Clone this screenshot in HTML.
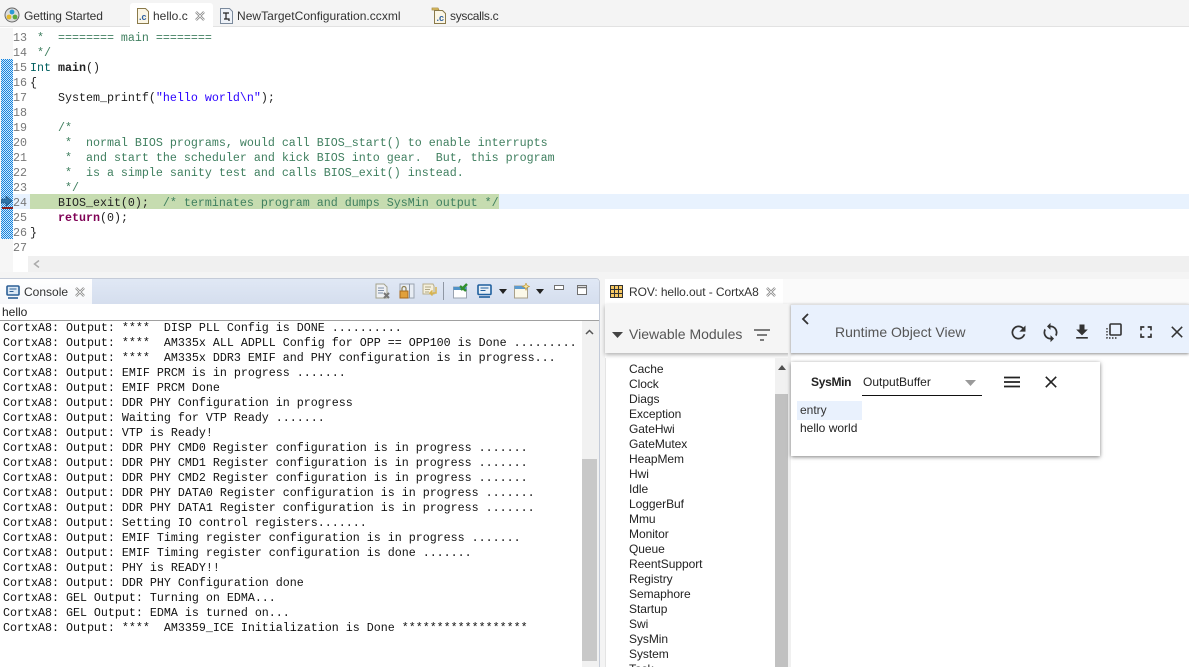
<!DOCTYPE html>
<html><head><meta charset="utf-8"><style>
html,body{margin:0;padding:0;background:#fff}
#p{position:relative;width:1189px;height:667px;overflow:hidden;background:#fff;font-family:"Liberation Sans",sans-serif}
#p div,#p svg,#p span.a{position:absolute}
.m{font-family:"Liberation Mono",monospace;font-size:11.67px;line-height:15px;white-space:pre;color:#222}
.l{left:13px;color:#787878;font-size:11.67px}
.c{color:#3f7f5f}.k{color:#7f0055;font-weight:bold}.s{color:#2a00ff}.t{color:#005f5f}
.tab{font-size:12px;color:#333;white-space:nowrap;line-height:16px}
.r{left:629px;font-size:12px;line-height:15px;color:#222;white-space:nowrap;letter-spacing:-.05px}
</style></head><body><div id="p">

<!-- top tab bar -->
<div style="left:0;top:0;width:1189px;height:27px;background:#f4f4f4;border-bottom:1px solid #e2e2e2;box-sizing:border-box"></div>
<div style="left:130px;top:3px;width:83px;height:25px;background:#fff;border-radius:3px 3px 0 0"></div>
<svg style="left:4px;top:7px" width="16" height="16" viewBox="0 0 16 16"><circle cx="8" cy="8" r="7" fill="#ddd" stroke="#666"/><circle cx="8" cy="5" r="2.400" fill="#2a9ad6"/><circle cx="5" cy="10" r="2.400" fill="#e2b82c"/><circle cx="11" cy="10" r="2.400" fill="#5ca83c"/></svg>
<div class="tab" style="left:24px;top:8px;letter-spacing:-.13px">Getting Started</div>
<svg style="left:136px;top:8px" width="14" height="16" viewBox="0 0 14 16"><path d="M1.500.5h8l3 3v12h-11z" fill="#fbf6e6" stroke="#8a7a4a"/><text x="3" y="12" font-family="Liberation Sans" font-size="9" font-weight="bold" fill="#2d5f9e">.c</text></svg>
<div class="tab" style="left:153px;top:8px">hello.c</div>
<svg style="left:195px;top:11px" width="10" height="10" viewBox="0 0 10 10"><path d="M1 1l8 8M9 1l-8 8" stroke="#888" stroke-width="2.400" fill="none"/><path d="M1 1l8 8M9 1l-8 8" stroke="#fff" stroke-width=".8" fill="none"/></svg>
<svg style="left:220px;top:8px" width="13" height="16" viewBox="0 0 13 16"><path d="M.5.5h9l3 3v12h-12z" fill="#eef2f8" stroke="#7b8a9c"/><path d="M3 5h6M6 5v6M4 11h5v2" stroke="#222" stroke-width="1.200" fill="none"/></svg>
<div class="tab" style="left:237px;top:8px;letter-spacing:.03px">NewTargetConfiguration.ccxml</div>
<svg style="left:431px;top:7px" width="16" height="17" viewBox="0 0 16 17"><path d="M1 1h6l1 2h-7z" fill="#e3c46a" stroke="#a58a3c" stroke-width=".7"/><path d="M3.500 3.500h8l3 3v10h-11z" fill="#fbf6e6" stroke="#8a7a4a"/><text x="5.500" y="14" font-family="Liberation Sans" font-size="9" font-weight="bold" fill="#2d5f9e">.c</text></svg>
<div class="tab" style="left:450px;top:8px;letter-spacing:-.3px">syscalls.c</div>

<!-- editor -->
<div style="left:0;top:28px;width:13px;height:244px;background:#f6f6f6"></div>
<svg style="left:1px;top:59px" width="12" height="180" shape-rendering="crispEdges"><defs><pattern id="h" width="2" height="2" patternUnits="userSpaceOnUse"><rect width="2" height="2" fill="#cfe8fb"/><rect width="1" height="1" fill="#1683dd"/><rect x="1" y="1" width="1" height="1" fill="#1683dd"/></pattern></defs><rect width="12" height="180" fill="url(#h)"/></svg>
<div style="left:13px;top:194px;width:1176px;height:15px;background:#e8f2fe"></div>
<div style="left:30px;top:194px;width:469px;height:15px;background:#c6dcb0"></div>
<svg style="left:1px;top:196px" width="12" height="13" viewBox="0 0 12 13"><path d="M0 3h5V0l6 5-6 5V7H0z" fill="#2f73a8" stroke="#1d4d77" stroke-width=".6"/><path d="M1 11h11v2H1z" fill="#8a2020"/></svg>

<div class="m l" style="top:31px">13</div><div class="m" style="left:30px;top:31px"><span class="c"> *  ======== main ========</span></div>
<div class="m l" style="top:46px">14</div><div class="m" style="left:30px;top:46px"><span class="c"> */</span></div>
<div class="m l" style="top:61px">15</div><div class="m" style="left:30px;top:61px"><span class="t">Int</span> <b>main</b>()</div>
<div class="m l" style="top:76px">16</div><div class="m" style="left:30px;top:76px">{</div>
<div class="m l" style="top:91px">17</div><div class="m" style="left:30px;top:91px">    System_printf(<span class="s">"hello world\n"</span>);</div>
<div class="m l" style="top:106px">18</div>
<div class="m l" style="top:121px">19</div><div class="m" style="left:30px;top:121px"><span class="c">    /*</span></div>
<div class="m l" style="top:136px">20</div><div class="m" style="left:30px;top:136px"><span class="c">     *  normal BIOS programs, would call BIOS_start() to enable interrupts</span></div>
<div class="m l" style="top:151px">21</div><div class="m" style="left:30px;top:151px"><span class="c">     *  and start the scheduler and kick BIOS into gear.  But, this program</span></div>
<div class="m l" style="top:166px">22</div><div class="m" style="left:30px;top:166px"><span class="c">     *  is a simple sanity test and calls BIOS_exit() instead.</span></div>
<div class="m l" style="top:181px">23</div><div class="m" style="left:30px;top:181px"><span class="c">     */</span></div>
<div class="m l" style="top:196px">24</div><div class="m" style="left:30px;top:196px">    BIOS_exit(0);  <span class="c">/* terminates program and dumps SysMin output */</span></div>
<div class="m l" style="top:211px">25</div><div class="m" style="left:30px;top:211px">    <span class="k">return</span>(0);</div>
<div class="m l" style="top:226px">26</div><div class="m" style="left:30px;top:226px">}</div>
<div class="m l" style="top:241px">27</div>

<div style="left:28px;top:256px;width:1161px;height:16px;background:#f0f0f0"></div>
<svg style="left:33px;top:260px" width="7" height="8" viewBox="0 0 7 8"><path d="M6 .5L1.500 4 6 7.500" stroke="#aaa" stroke-width="1.500" fill="none"/></svg>
<div style="left:0;top:272px;width:1189px;height:7px;background:#f4f4f4"></div>

<!-- console panel -->
<div style="left:0;top:278px;width:600px;height:389px;background:#fff;border-top:1px solid #c4cbd8;border-right:1px solid #c4cbd8;box-sizing:border-box;border-radius:0 4px 0 0"></div>
<div style="left:0;top:279px;width:599px;height:25px;background:linear-gradient(#e0e8f5,#d5deee);border-radius:0 3px 0 0"></div>
<div style="left:0;top:279px;width:92px;height:25px;background:linear-gradient(#fff,#f6f7fa)"></div>
<svg style="left:6px;top:285px" width="14" height="14" viewBox="0 0 14 14"><rect x="1" y="1" width="12" height="9" rx="1" fill="#dbe8f5" stroke="#2c5f95" stroke-width="1.600"/><path d="M3.500 4h7M3.500 6.500h4" stroke="#2c5f95"/><path d="M2 13h10" stroke="#2c5f95" stroke-width="1.600"/></svg>
<div class="tab" style="left:24px;top:284px">Console</div>
<svg style="left:75px;top:287px" width="10" height="10" viewBox="0 0 10 10"><path d="M1 1l8 8M9 1l-8 8" stroke="#888" stroke-width="2.400" fill="none"/><path d="M1 1l8 8M9 1l-8 8" stroke="#fff" stroke-width=".8" fill="none"/></svg>

<!-- console toolbar -->
<svg style="left:375px;top:283px" width="16" height="16" viewBox="0 0 16 16"><path d="M1 1h8l3 3v11H1z" fill="#eef0f4" stroke="#a4a28c"/><path d="M3 5h6M3 7.500h6M3 10h5" stroke="#7f8fa8"/><path d="M9 10l5 5M14 10l-5 5" stroke="#777" stroke-width="2"/></svg>
<svg style="left:399px;top:283px" width="16" height="16" viewBox="0 0 16 16"><rect x="1" y="1" width="14" height="14" fill="#e8edf4" stroke="#9aa3b0"/><path d="M10.500 1v14" stroke="#8795a8"/><rect x="1" y="8" width="8" height="7" fill="#e0a03c" stroke="#a8691c"/><path d="M3 8V5.500a2 2 0 0 1 4 0V8" stroke="#8a7a4a" fill="none" stroke-width="1.200"/></svg>
<svg style="left:422px;top:283px" width="16" height="16" viewBox="0 0 16 16"><path d="M1 1h10l1 2v8H1z" fill="#f5f0dc" stroke="#b8ae8c"/><path d="M3 4h6M3 6.500h5M3 9h4" stroke="#b0a888"/><path d="M14 4v6H8M10.500 7.500L8 10l2.500 2.500" stroke="#d8b34e" stroke-width="1.500" fill="none"/></svg>
<div style="left:443px;top:282px;width:1px;height:18px;background:#8f97a4"></div>
<svg style="left:453px;top:283px" width="16" height="16" viewBox="0 0 16 16"><rect x=".5" y="4" width="13" height="11" fill="#fff" stroke="#9aa3b0"/><rect x=".5" y="4" width="13" height="3" fill="#4f92c8"/><path d="M8 7l6-6M7 3l6 5" stroke="#2f8f2f" stroke-width="2.400"/></svg>
<svg style="left:477px;top:284px" width="15" height="14" viewBox="0 0 15 14"><rect x="1" y="1" width="13" height="9.500" rx="1" fill="#e8f0f8" stroke="#1f5f9e" stroke-width="1.600"/><path d="M3.500 4h8M3.500 6.500h5" stroke="#1f5f9e"/><path d="M2 13h11" stroke="#1f5f9e" stroke-width="1.600"/></svg>
<svg style="left:499px;top:289px" width="8" height="5"><path d="M0 0h8L4 5z" fill="#222"/></svg>
<svg style="left:514px;top:283px" width="16" height="16" viewBox="0 0 16 16"><rect x=".5" y="3" width="13" height="12" fill="#fbf8e8" stroke="#a8a08a"/><rect x=".5" y="3" width="13" height="3" fill="#5a9ad0"/><path d="M12 0l1 2.500 2.500 1-2.500 1-1 2.500-1-2.500-2.500-1 2.500-1z" fill="#f5e9a8" stroke="#c59a3a" stroke-width=".7"/></svg>
<svg style="left:536px;top:289px" width="8" height="5"><path d="M0 0h8L4 5z" fill="#222"/></svg>
<svg style="left:554px;top:285px" width="11" height="6"><rect x=".5" y=".5" width="9" height="4" fill="#fff" stroke="#707070"/></svg>
<svg style="left:577px;top:285px" width="11" height="11"><rect x=".5" y=".5" width="9" height="9" fill="#fff" stroke="#707070"/><path d="M0 2.500h10" stroke="#707070" stroke-width="1.500"/></svg>

<div style="left:2px;top:305px;font-size:12px;line-height:15px;color:#222">hello</div>

<div class="m" style="left:3px;top:321px;color:#111">CortxA8: Output: ****  DISP PLL Config is DONE ..........
CortxA8: Output: ****  AM335x ALL ADPLL Config for OPP == OPP100 is Done .........
CortxA8: Output: ****  AM335x DDR3 EMIF and PHY configuration is in progress...
CortxA8: Output: EMIF PRCM is in progress .......
CortxA8: Output: EMIF PRCM Done
CortxA8: Output: DDR PHY Configuration in progress
CortxA8: Output: Waiting for VTP Ready .......
CortxA8: Output: VTP is Ready!
CortxA8: Output: DDR PHY CMD0 Register configuration is in progress .......
CortxA8: Output: DDR PHY CMD1 Register configuration is in progress .......
CortxA8: Output: DDR PHY CMD2 Register configuration is in progress .......
CortxA8: Output: DDR PHY DATA0 Register configuration is in progress .......
CortxA8: Output: DDR PHY DATA1 Register configuration is in progress .......
CortxA8: Output: Setting IO control registers.......
CortxA8: Output: EMIF Timing register configuration is in progress .......
CortxA8: Output: EMIF Timing register configuration is done .......
CortxA8: Output: PHY is READY!!
CortxA8: Output: DDR PHY Configuration done
CortxA8: GEL Output: Turning on EDMA...
CortxA8: GEL Output: EDMA is turned on...
CortxA8: Output: ****  AM3359_ICE Initialization is Done ******************</div>
<div style="left:0;top:320px;width:599px;height:1px;background:#a0a0a0"></div>

<div style="left:582px;top:321px;width:17px;height:346px;background:#f1f1f1"></div>
<div style="left:582px;top:459px;width:15px;height:202px;background:#c8c8c8"></div>
<svg style="left:585px;top:329px" width="9" height="6" viewBox="0 0 9 6"><path d="M1 5l3.500-3.500L8 5" stroke="#555" stroke-width="1.500" fill="none"/></svg>

<!-- ROV panel -->
<div style="left:600px;top:279px;width:5px;height:388px;background:#f4f4f4"></div>
<div style="left:605px;top:279px;width:584px;height:25px;background:#fafafa"></div>
<div style="left:605px;top:279px;width:178px;height:25px;background:#fff"></div>
<svg style="left:610px;top:285px" width="13" height="13" viewBox="0 0 13 13"><rect x=".5" y=".5" width="12" height="12" fill="#f6c863" stroke="#333"/><path d="M4.500 0v13M8.500 0v13M0 4.500h13M0 8.500h13" stroke="#333"/></svg>
<div class="tab" style="left:629px;top:284px;letter-spacing:-.08px">ROV: hello.out - CortxA8</div>
<svg style="left:766px;top:287px" width="10" height="10" viewBox="0 0 10 10"><path d="M1 1l8 8M9 1l-8 8" stroke="#888" stroke-width="2.400" fill="none"/><path d="M1 1l8 8M9 1l-8 8" stroke="#fff" stroke-width=".8" fill="none"/></svg>

<div style="left:605px;top:304px;width:584px;height:363px;background:#fff"></div>
<div style="left:605px;top:304px;width:186px;height:49px;background:#f5f5f5;box-shadow:0 2px 4px rgba(0,0,0,.3)"></div>
<svg style="left:612px;top:332px" width="11" height="6"><path d="M0 0h11L5.500 6z" fill="#444"/></svg>
<div style="left:629px;top:326px;font-size:14px;line-height:16px;color:#555;white-space:nowrap">Viewable Modules</div>
<svg style="left:754px;top:329px" width="16" height="12" viewBox="0 0 16 12"><path d="M0 1h16M3 6h10M6 11h4" stroke="#555" stroke-width="1.600"/></svg>

<div style="left:605px;top:358px;width:1px;height:309px;background:#e4e4e4"></div>
<div style="left:775px;top:358px;width:13px;height:309px;background:#f1f1f1"></div>
<div style="left:775px;top:394px;width:13px;height:273px;background:#c1c1c1"></div>
<svg style="left:778px;top:365px" width="8" height="5"><path d="M4 0l4 5H0z" fill="#505050"/></svg>
<div style="left:788px;top:353px;width:3px;height:314px;background:#f0f0f0"></div>

<div class="r" style="top:362px">Cache</div>
<div class="r" style="top:377px">Clock</div>
<div class="r" style="top:392px">Diags</div>
<div class="r" style="top:407px">Exception</div>
<div class="r" style="top:422px">GateHwi</div>
<div class="r" style="top:437px">GateMutex</div>
<div class="r" style="top:452px">HeapMem</div>
<div class="r" style="top:467px">Hwi</div>
<div class="r" style="top:482px">Idle</div>
<div class="r" style="top:497px">LoggerBuf</div>
<div class="r" style="top:512px">Mmu</div>
<div class="r" style="top:527px">Monitor</div>
<div class="r" style="top:542px">Queue</div>
<div class="r" style="top:557px">ReentSupport</div>
<div class="r" style="top:572px">Registry</div>
<div class="r" style="top:587px">Semaphore</div>
<div class="r" style="top:602px">Startup</div>
<div class="r" style="top:617px">Swi</div>
<div class="r" style="top:632px">SysMin</div>
<div class="r" style="top:647px">System</div>
<div class="r" style="top:662px">Task</div>

<!-- Runtime Object View bar -->
<div style="left:791px;top:304px;width:398px;height:49px;background:#e9f1fd;border-top:1px solid #e0e0e0;box-sizing:border-box;box-shadow:0 1px 3px rgba(0,0,0,.45)"></div>
<svg style="left:801px;top:313px" width="8" height="12" viewBox="0 0 8 12"><path d="M7 1L2 6l5 5" stroke="#333" stroke-width="1.800" fill="none"/></svg>
<div style="left:835px;top:324px;font-size:14px;line-height:16px;color:#555;white-space:nowrap">Runtime Object View</div>
<svg style="left:1008px;top:322px" width="21" height="21" viewBox="0 0 24 24"><path fill="#333" d="M17.650 6.350A7.958 7.958 0 0 0 12 4a8 8 0 1 0 7.730 10h-2.080A6 6 0 1 1 12 6c1.660 0 3.140.69 4.220 1.780L13 11h7V4z"/></svg>
<svg style="left:1040px;top:322px" width="21" height="21" viewBox="0 0 24 24"><path fill="#333" d="M12 4V1L8 5l4 4V6c3.310 0 6 2.690 6 6 0 1.010-.25 1.970-.7 2.800l1.460 1.460A7.930 7.930 0 0 0 20 12c0-4.420-3.580-8-8-8zm0 14c-3.310 0-6-2.690-6-6 0-1.010.25-1.970.7-2.800L5.240 7.740A7.930 7.930 0 0 0 4 12c0 4.420 3.580 8 8 8v3l4-4-4-4v3z"/></svg>
<svg style="left:1072px;top:322px" width="20" height="20" viewBox="0 0 24 24"><path fill="#333" d="M19 9h-4V3H9v6H5l7 7 7-7zM5 18v2h14v-2H5z"/></svg>
<svg style="left:1105px;top:322px" width="18" height="18" viewBox="0 0 18 18"><rect x="5" y="2" width="11" height="11" rx="1" fill="none" stroke="#333" stroke-width="1.600"/><path d="M2 6v10h10" fill="none" stroke="#333" stroke-width="1.400" stroke-dasharray="1.500 1.500"/></svg>
<svg style="left:1136px;top:322px" width="20" height="20" viewBox="0 0 24 24"><path fill="#333" d="M7 14H5v5h5v-2H7v-3zm-2-4h2V7h3V5H5v5zm12 7h-3v2h5v-5h-2v3zM14 5v2h3v3h2V5h-5z"/></svg>
<svg style="left:1171px;top:326px" width="12" height="12" viewBox="0 0 12 12"><path d="M.8.8l10.400 10.400M11.200.8L.8 11.200" stroke="#333" stroke-width="1.500"/></svg>

<!-- SysMin card -->
<div style="left:791px;top:362px;width:309px;height:94px;background:#fff;box-shadow:0 1px 4px rgba(0,0,0,.5)"></div>
<div style="left:811px;top:374px;font-size:12px;line-height:16px;font-weight:bold;color:#222;letter-spacing:-.3px">SysMin</div>
<div style="left:863px;top:374px;font-size:12px;line-height:16px;color:#222">OutputBuffer</div>
<svg style="left:965px;top:380px" width="11" height="6"><path d="M0 0h11L5.500 6z" fill="#9a9a9a"/></svg>
<div style="left:862px;top:395px;width:120px;height:1px;background:#111"></div>
<svg style="left:1004px;top:376px" width="16" height="12" viewBox="0 0 16 12"><path d="M0 1.500h16M0 6h16M0 10.500h16" stroke="#222" stroke-width="1.700"/></svg>
<svg style="left:1045px;top:376px" width="12" height="12" viewBox="0 0 12 12"><path d="M.8.8l10.400 10.400M11.200.8L.8 11.200" stroke="#222" stroke-width="1.600"/></svg>
<div style="left:797px;top:401px;width:65px;height:19px;background:#e9f1fd"></div>
<div style="left:800px;top:402px;font-size:12px;line-height:16px;color:#333">entry</div>
<div style="left:800px;top:420px;font-size:12px;line-height:16px;color:#222;white-space:nowrap">hello world</div>

</div></body></html>
